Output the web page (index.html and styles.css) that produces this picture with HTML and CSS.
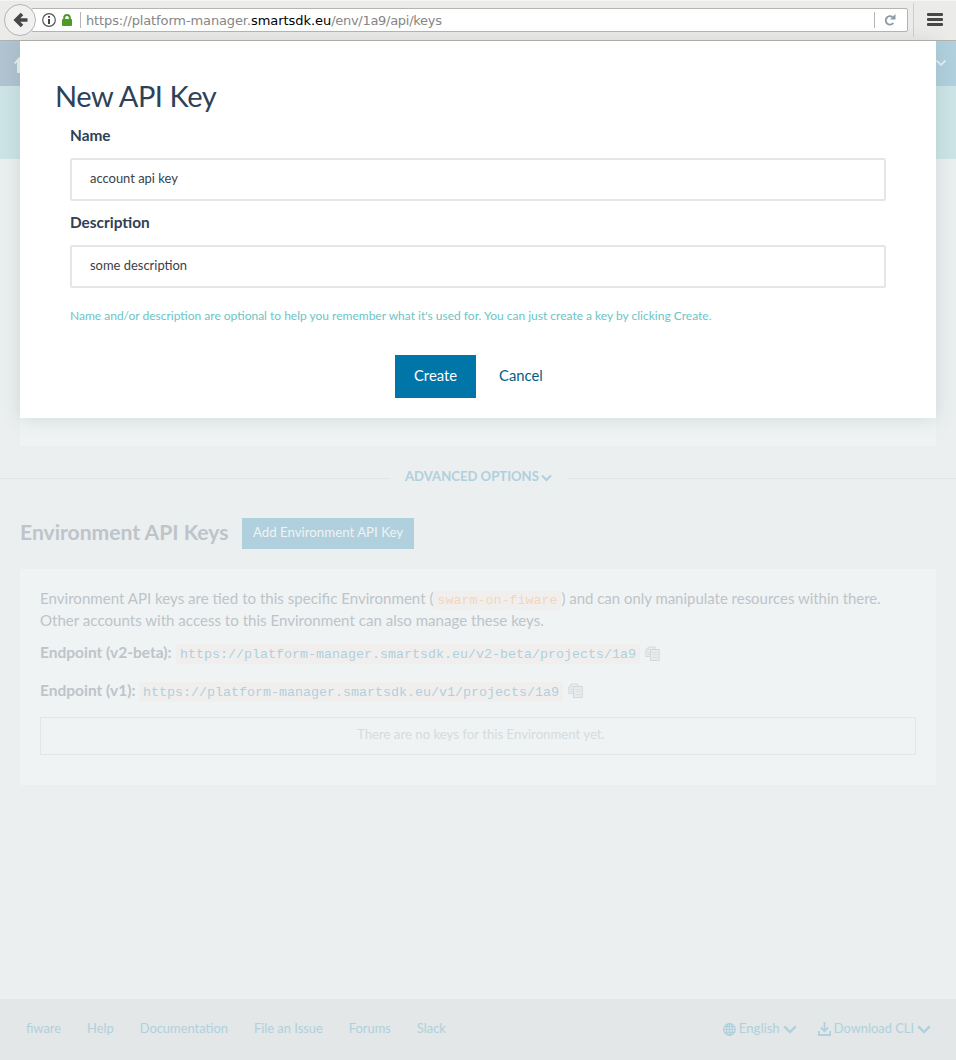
FILE: index.html
```html
<!DOCTYPE html>
<html lang="en">
<head>
<meta charset="utf-8">
<title>API Keys</title>
<link rel="stylesheet" href="styles.css">
</head>
<body>
<header class="browser">
  <div class="back"><svg width="32" height="32" viewBox="0 0 32 32"><path d="M12 16H23.500M18 10l-6 6 6 6" fill="none" stroke="#474747" stroke-width="3.600"/></svg></div>
  <div class="urlbar">
    <svg class="info" width="14" height="14" viewBox="0 0 14 14"><circle cx="7" cy="7" r="6.300" fill="none" stroke="#555" stroke-width="1.200"/><path d="M7 3v1.800M7 6v5" stroke="#444" stroke-width="2"/></svg>
    <svg class="lock" width="10" height="12" viewBox="0 0 10 12"><path d="M2.200 6V3.800a2.800 2.800 0 0 1 5.600 0V6" fill="none" stroke="#4d9a26" stroke-width="2"/><rect y="5" width="10" height="7" rx="1" fill="#4d9a26"/></svg>
    <span class="bar"></span>
    <span class="url">https://platform-manager.<b>smartsdk.eu</b><span class="path">/env/1a9/api/keys</span></span>
    <span class="bar end"></span>
    <svg class="reload" width="12" height="12" viewBox="0 0 12 12"><path d="M9.300 9A4.200 4.200 0 1 1 8.500 3" fill="none" stroke="#8c9aa8" stroke-width="2"/><path d="M11.500 0v5.500H6z" fill="#8c9aa8"/></svg>
  </div>
  <div class="menu"><i></i><i></i><i></i></div>
</header>
<div class="page">
  <nav class="topnav">
    <svg width="12" height="17" viewBox="0 0 12 17"><path d="M0 6L5 0h1v16H3V5.500L1 7z" fill="#e8eeee"/></svg>
    <svg width="12" height="8" viewBox="0 0 12 8"><path d="M1.500 1.500L6 6l4.500-4.500" fill="none" stroke="#e5eeee" stroke-width="1.800"/></svg>
  </nav>
  <div class="subnav"></div>
  <section class="panel account"></section>
  <div class="advanced"><span class="rule"></span><span class="adv-label"><b>ADVANCED OPTIONS</b><svg width="11" height="8" viewBox="0 0 11 8"><path d="M1 1.500L5.500 6 10 1.500" fill="none" stroke="#b0d0dd" stroke-width="2.100"/></svg></span><span class="rule"></span></div>
  <div class="heading"><h2>Environment API Keys</h2><a class="add">Add Environment API Key</a></div>
  <section class="panel keys">
    <p class="intro">Environment API keys are tied to this specific Environment (<code class="name">swarm-on-fiware</code><span class="tail">) and can only manipulate resources within there.</span><br>Other accounts with access to this Environment can also manage these keys.</p>
    <div class="endpoint"><b class="e1">Endpoint (v2-beta):</b><code>https://platform-manager.smartsdk.eu/v2-beta/projects/1a9</code><svg class="copy" width="15" height="15" viewBox="0 0 15 15"><path d="M3.500 1H10v3H6v6.500H.8V4z" fill="#e9edee" stroke="#d5dadb"/><path d="M3.500 1v3H.8M2 6.500h3M2 8.500h3" fill="none" stroke="#d9dedf"/><path d="M5.500 3.500h8.700v11H5.500z" fill="#e7ebec" stroke="#d2d7d8"/><path d="M7.500 6.500h5M7.500 8.500h5M7.500 11.500h5" stroke="#dce0e1"/></svg></div>
    <div class="endpoint second"><b class="e2">Endpoint (v1):</b><code>https://platform-manager.smartsdk.eu/v1/projects/1a9</code><svg class="copy" width="15" height="15" viewBox="0 0 15 15"><path d="M3.500 1H10v3H6v6.500H.8V4z" fill="#e9edee" stroke="#d5dadb"/><path d="M3.500 1v3H.8M2 6.500h3M2 8.500h3" fill="none" stroke="#d9dedf"/><path d="M5.500 3.500h8.700v11H5.500z" fill="#e7ebec" stroke="#d2d7d8"/><path d="M7.500 6.500h5M7.500 8.500h5M7.500 11.500h5" stroke="#dce0e1"/></svg></div>
    <div class="empty">There are no keys for this Environment yet.</div>
  </section>
  <footer class="footer">
    <a>fiware</a><a>Help</a><a>Documentation</a><a>File an Issue</a><a>Forums</a><a>Slack</a>
    <span class="lang"><svg width="13" height="13" viewBox="0 0 13 13"><g fill="none" stroke="#b0d0dd" stroke-width="1.200"><circle cx="6.500" cy="6.500" r="5.800"/><ellipse cx="6.500" cy="6.500" rx="3" ry="5.800"/><path d="M6.500.5v12M.5 6.500h12M1.500 3.700h10M1.500 9.300h10"/></g></svg><span>English</span><svg width="14" height="9" viewBox="0 0 14 9"><path d="M1.300 1.300L7 7l5.700-5.700" fill="none" stroke="#b0d0dd" stroke-width="2.400"/></svg></span>
    <span class="cli"><svg width="13" height="14" viewBox="0 0 13 14"><path d="M6.500 0v9M2.800 5.500l3.700 3.700 3.700-3.700M.8 9v4h11.400V9" fill="none" stroke="#b0d0dd" stroke-width="1.800"/></svg><span>Download CLI</span><svg width="14" height="9" viewBox="0 0 14 9"><path d="M1.300 1.300L7 7l5.700-5.700" fill="none" stroke="#b0d0dd" stroke-width="2.400"/></svg></span>
  </footer>
  <div class="modal">
    <h1>New API Key</h1>
    <div class="form">
      <label>Name</label>
      <div class="input">account api key</div>
      <label>Description</label>
      <div class="input">some description</div>
      <p class="help">Name and/or description are optional to help you remember what it's used for. You can just create a key by clicking Create.</p>
    </div>
    <div class="actions"><a class="create">Create</a><a class="cancel">Cancel</a></div>
  </div>
</div>
</body>
</html>
```
FILE: styles.css
```css
* { box-sizing: border-box; }
body { margin: 0; width: 956px; height: 1060px; overflow: hidden; background: #ebeff0; font-family: Lato, sans-serif; font-size: 15px; color: #bec4c9; }
svg { display: block; flex: none; }
.browser { display: flex; align-items: flex-start; height: 41px; background: #ebebe9; border-top: 1px solid #f5f5f3; border-bottom: 1px solid #b2b2b0; }
.back { z-index: 1; width: 32px; height: 32px; margin: 3px -5px 0 4px; border: 1px solid #b4b4b2; border-radius: 50%; background: #f1f1f1; }
.back svg { margin: -1px; }
.urlbar { display: flex; align-items: center; width: 877px; height: 24px; margin-top: 7px; padding-left: 10px; border: 1px solid #b4b4b2; border-radius: 2px; background: #fff; }
.lock { margin: 0 8px 0 6px; }
.bar { flex: none; width: 1px; height: 16px; background: #b5b5b5; margin-right: 5px; }
.url { flex: none; width: 788px; font: 13px "DejaVu Sans", sans-serif; letter-spacing: -.12px; color: #868686; white-space: nowrap; }
.url b { font-weight: 400; letter-spacing: -.05px; color: #000; }
.path { letter-spacing: -.28px; }
.bar.end { margin-right: 9px; }
.menu { display: flex; flex-direction: column; gap: 2px; height: 34px; margin: 2px 0 0 5px; padding: 10px 0 0 13px; border-left: 1px solid #cececc; }
.menu i { width: 16px; height: 3px; border-radius: 1px; background: #484848; }
.page { position: relative; display: flex; flex-direction: column; height: 1019px; }
.topnav { display: flex; justify-content: space-between; height: 45px; padding: 16px 9px 0 14px; background: linear-gradient(90deg, #b0c3d1 0 478px, #b0d0de 478px); }
.topnav svg + svg { margin-top: 2px; }
.subnav { height: 73px; background: #cce4e5; }
.panel { margin: 0 20px; background: #eff3f4; }
.account { height: 287px; }
.advanced { display: flex; align-items: center; height: 20px; margin-top: 22px; }
.rule { flex: none; width: 390px; height: 1px; background: #e2e6e7; }
.adv-label { display: flex; align-items: center; flex: none; width: 177px; height: 20px; padding-left: 15px; gap: 2px; margin-top: -5px; font-size: 13.1px; color: #b0d0dd; }
.adv-label svg { margin-top: 4px; }
.heading { display: flex; align-items: flex-start; height: 31px; margin: 30px 20px 0; }
h2 { flex: none; width: 222px; margin: 0; font-size: 21.1px; line-height: 28px; white-space: nowrap; }
.add { width: 172px; height: 31px; padding-left: 11px; background: #b0d0dd; color: #eff3f4; font-size: 13.25px; line-height: 29px; white-space: nowrap; }
.keys { height: 216px; margin-top: 20px; padding: 18px 20px; white-space: nowrap; }
.intro { height: 44px; margin: 0; font-size: 15.09px; line-height: 22px; }
.tail { font-size: 14.95px; }
code { height: 20px; padding: 2px 4px; font: 13.33px/16px "Liberation Mono", monospace; background: #f0efed; color: #b0d0dd; }
.name { color: #f3d5bd; }
.endpoint { display: flex; align-items: center; height: 20px; margin-top: 13px; }
.endpoint code { padding-top: 3px; }
.endpoint b { flex: none; margin-top: -4px; font-size: 15.5px; line-height: 20px; }
.e1 { width: 136px; }
.e2 { width: 99px; }
.endpoint.second { margin-top: 18px; }
.copy { margin: 0 0 1px 5px; }
.second .copy { margin-bottom: 3px; }
.empty { height: 38px; margin-top: 15px; padding-left: 316px; border: 1px solid #e2e6e7; font-size: 13.2px; line-height: 33px; color: #d6dbdc; }
.footer { display: flex; align-items: flex-start; height: 61px; margin-top: auto; padding: 19px 25px 0 26px; background: #e3e7e7; color: #b0d0dd; font-size: 12.88px; line-height: 20px; white-space: nowrap; }
.footer a { margin-right: 26px; }
.lang, .cli { display: flex; align-items: center; gap: 3px; }
.lang svg, .cli svg { margin-top: 2px; }
.lang { margin-left: auto; font-size: 13.2px; }
.cli { margin-left: 21px; }
.modal { position: absolute; left: 20px; top: 0; width: 916px; height: 377px; padding: 37px 35px 0; background: #fff; color: #2e4156; box-shadow: 0 2px 18px rgba(60, 90, 90, .15); white-space: nowrap; }
h1 { margin: 0; font-size: 29px; font-weight: 400; line-height: 36px; letter-spacing: -.45px; }
.form { padding: 11px 15px 0; }
label { display: block; height: 33px; font-size: 15.4px; font-weight: 700; line-height: 21px; }
.input { height: 43px; padding-left: 18px; margin-bottom: 11px; border: 2px solid #e3e7e7; border-radius: 2px; font-size: 12.95px; line-height: 37px; color: #3a4048; }
.help { margin: 20px 0 0; font-size: 12px; line-height: 16px; color: #6cc4c6; }
.actions { display: flex; height: 43px; margin: 31px 0 0 340px; font-size: 14.8px; line-height: 41px; }
.create { width: 81px; text-align: center; background: #0075a8; color: #fff; }
.cancel { margin-left: 23px; color: #005e87; }
```
